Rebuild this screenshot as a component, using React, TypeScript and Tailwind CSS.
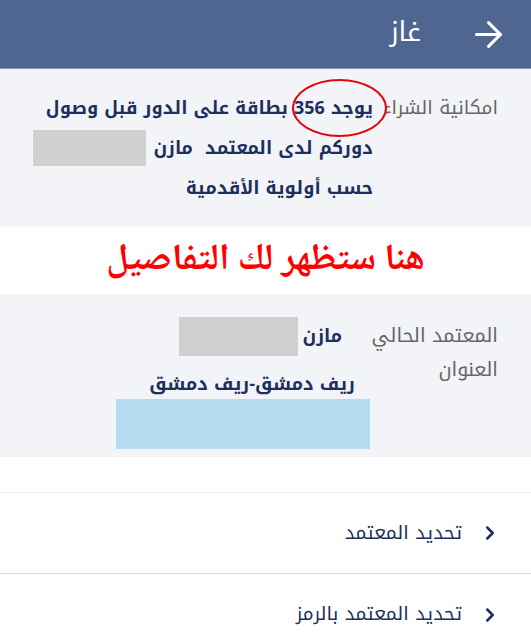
import { ArrowRight, ChevronRight } from "lucide-react";

const kufi = { fontFamily: '"Noto Kufi Arabic", "Noto Sans Arabic", "DejaVu Sans", sans-serif' };
const naskh = { fontFamily: '"Noto Naskh Arabic", "DejaVu Sans", serif' };

const menuItems = ["تحديد المعتمد", "تحديد المعتمد بالرمز"];

export default function App() {
  return (
    <div dir="rtl" style={kufi} className="w-[531px] h-[640px] bg-white overflow-hidden">
      {/* Header */}
      <div className="h-[69px] bg-[#4e6690] flex items-center pr-[22px] gap-[47px] border-b border-[#8a9cbb]">
        <ArrowRight className="w-[41px] h-[41px] text-white" strokeWidth={1.8} />
        <h1 className="text-[27px] text-white leading-none pb-[4px]">غاز</h1>
      </div>

      {/* Purchase availability */}
      <div className="relative h-[158px] bg-[#f2f4f8] pt-[19px] pr-[33px] flex gap-[13px]">
        <div className="w-[112px] shrink-0 overflow-hidden whitespace-nowrap text-[19px] leading-[40px] text-[#666]">
          امكانية الشراء
        </div>
        <div className="text-[18px] font-bold leading-[40px] text-[#1d2f5e] whitespace-nowrap">
          <div>يوجد 356 بطاقة على الدور قبل وصول</div>
          <div className="flex items-center gap-[7px]">
            <span>دوركم لدى المعتمد&nbsp; مازن</span>
            <span className="inline-block w-[113px] h-[36px] bg-[#d0d0d0]" />
          </div>
          <div>حسب أولوية الأقدمية</div>
        </div>
        <div className="absolute left-[292px] top-[10px] w-[95px] h-[58px] rounded-[50%] border-2 border-[#e3050c]" />
      </div>

      {/* Note */}
      <div className="h-[67px] flex items-center justify-center">
        <p style={naskh} className="text-[37px] font-bold text-[#ff0000] leading-none">
          هنا ستظهر لك التفاصيل
        </p>
      </div>

      {/* Current agent */}
      <div className="h-[163px] bg-[#f2f4f8] pr-[33px] flex">
        <div className="w-[126px] shrink-0 pt-[25px] text-[19.5px] leading-[34px] text-[#666] whitespace-nowrap">
          <div>المعتمد الحالي</div>
          <div>العنوان</div>
        </div>
        <div className="pt-[23px] text-[18px] font-bold text-[#1d2f5e]">
          <div className="h-[39px] mr-[30px] flex items-center gap-[4px]">
            <span>مازن</span>
            <span className="inline-block w-[119px] h-[39px] bg-[#d0d0d0]" />
          </div>
          <div className="mt-[13px] mr-[17px] leading-[30px] whitespace-nowrap">ريف دمشق-ريف دمشق</div>
          <div className="mr-[2px] w-[254px] h-[50px] bg-[#b3dcf0]" />
        </div>
      </div>

      {/* Menu */}
      <div className="h-[36px] border-b border-[#eeeeee]" />
      {menuItems.map((item, index) => (
        <div
          key={index}
          className={`h-[81px] flex items-center pr-[30px] gap-[17px] ${
            index === 0 ? "border-b border-[#dcdcdc]" : ""
          }`}
        >
          <ChevronRight className="w-[22px] h-[22px] text-[#1d2f5e]" strokeWidth={2.7} />
          <span className="text-[19px] text-[#1d2f5e]">{item}</span>
        </div>
      ))}
    </div>
  );
}
